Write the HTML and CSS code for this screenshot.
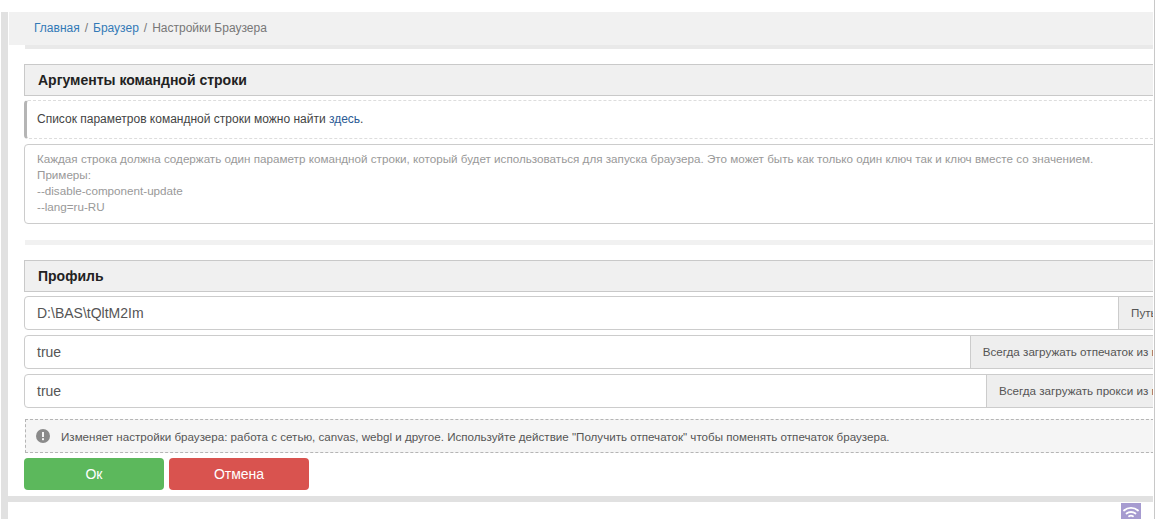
FILE: index.html
```html
<!DOCTYPE html>
<html lang="ru">
<head>
<meta charset="utf-8">
<title>Настройки Браузера</title>
<link rel="stylesheet" href="styles.css">
</head>
<body>
<div class="page">
  <div class="frame">
    <div class="panel">
      <nav class="crumbs">
        <a href="#">Главная</a><span class="sep">/</span><a href="#">Браузер</a><span class="sep">/</span><span class="current">Настройки Браузера</span>
      </nav>
      <div class="crumbs-shadow"></div>
      <div class="body">
        <div class="inner">
          <h3 class="head">Аргументы командной строки</h3>
          <p class="note">Список параметров командной строки можно найти <a href="#">здесь</a>.</p>
          <div class="args">Каждая строка должна содержать один параметр командной строки, который будет использоваться для запуска браузера. Это может быть как только один ключ так и ключ вместе со значением.<br>Примеры:<br>--disable-component-update<br>--lang=ru-RU</div>
          <div class="divider"></div>
          <h3 class="head">Профиль</h3>
          <div class="group">
            <div class="value">D:\BAS\tQltM2Im</div>
            <div class="addon addon-path">Путь профиля</div>
          </div>
          <div class="group">
            <div class="value">true</div>
            <div class="addon">Всегда загружать отпечаток из профиля</div>
          </div>
          <div class="group">
            <div class="value">true</div>
            <div class="addon">Всегда загружать прокси из профиля</div>
          </div>
          <div class="info">
            <svg class="info-icon" viewBox="0 0 14 14" width="14" height="14"><circle cx="7" cy="7" r="7" fill="#8a8a8a"/><rect x="6" y="3" width="2" height="5" fill="#f5f5f5"/><rect x="6" y="9.2" width="2" height="2" fill="#f5f5f5"/></svg>
            <span>Изменяет настройки браузера: работа с сетью, canvas, webgl и другое. Используйте действие "Получить отпечаток" чтобы поменять отпечаток браузера.</span>
          </div>
          <div class="actions">
            <button class="btn ok">Ок</button>
            <button class="btn cancel">Отмена</button>
          </div>
        </div>
      </div>
    </div>
    <div class="status">
      <div class="wifi">
        <svg viewBox="0 0 20 16" width="20" height="16"><g fill="none" stroke="#fff" stroke-width="1.8" stroke-linecap="round"><path d="M3 7.5C7 4 13 4 17 7.5"/><path d="M5.5 10.5C8 8.5 12 8.5 14.5 10.5"/><path d="M8 13.3C9 12.6 11 12.6 12 13.3"/></g></svg>
      </div>
    </div>
  </div>
</div>
</body>
</html>
```
FILE: styles.css
```css
* { box-sizing: border-box; }
html, body { margin: 0; padding: 0; height: 519px; overflow: hidden; background: #fff; }
body { font-family: "Liberation Sans", Arial, sans-serif; font-size: 12px; color: #333; }
.page { width: 1155px; height: 519px; padding: 12px 0 0 1px; border-right: 1px solid #c8c8c8; }
.frame { width: 1152px; height: 507px; border-left: 7px solid #e1e1e1; }
.panel { border-bottom: 6px solid #e1e1e1; height: 490px; overflow: hidden; }
.crumbs { height: 33px; margin-left: 1px; background: #f1f1f1; padding-left: 25px; line-height: 33px; color: #777; }
.crumbs a { color: #337ab7; text-decoration: none; }
.sep { padding: 0 5px; color: #777; }
.crumbs-shadow { height: 4px; margin-left: 17px; background: #e9e9e9; }
.body { padding: 15px 0 0 16px; overflow: hidden; }
.inner { width: 1190px; }
.head { margin: 0; height: 32px; line-height: 30px; padding-left: 13px; font-size: 14px; font-weight: bold; color: #222; background: #f0f0f0; border: 1px solid #c9c9c9; }
.note { margin: 4px 0 5px; height: 39px; line-height: 36px; padding-left: 10px; color: #444; border: 1px dashed #ddd; border-left: 3px solid #b5b5b5; border-right: 0; border-radius: 4px 0 0 4px; }
.note a { color: #2a5a94; text-decoration: none; }
.args { height: 80px; padding: 6px 12px; font-size: 11.66px; line-height: 16px; color: #999; border: 1px solid #ccc; border-radius: 4px; }
.divider { height: 5px; margin: 16px 0 15px 1px; background: #f1f1f1; }
.group { display: flex; height: 34px; margin-top: 5px; border: 1px solid #ccc; border-radius: 4px; }
.head + .group { margin-top: 4px; }
.value { flex: 1; line-height: 32px; padding-left: 12px; font-size: 14px; color: #555; }
.addon { padding: 0 13px 0 12px; line-height: 32px; font-size: 11.66px; color: #555; background: #eee; border-left: 1px solid #ccc; white-space: nowrap; }
.addon-path { flex: 0 0 95px; min-width: 0; }
.info { display: flex; align-items: center; gap: 11px; height: 34px; margin: 11px 0 5px 1px; padding-left: 10px; font-size: 11.6px; color: #555; background: #f5f5f5; border: 1px dashed #b5b5b5; }
.info-icon { flex: none; }
.actions { display: flex; gap: 5px; }
.btn { width: 140px; height: 32px; padding: 0; font: 14px "Liberation Sans", Arial, sans-serif; color: #fff; border: 0; border-radius: 4px; }
.ok { background: #5cb85c; }
.cancel { background: #d9534f; }
.status { display: flex; justify-content: flex-end; padding: 1px 12px 0 0; height: 17px; }
.wifi { width: 20px; height: 16px; background: #a69bd0; line-height: 0; }
```
